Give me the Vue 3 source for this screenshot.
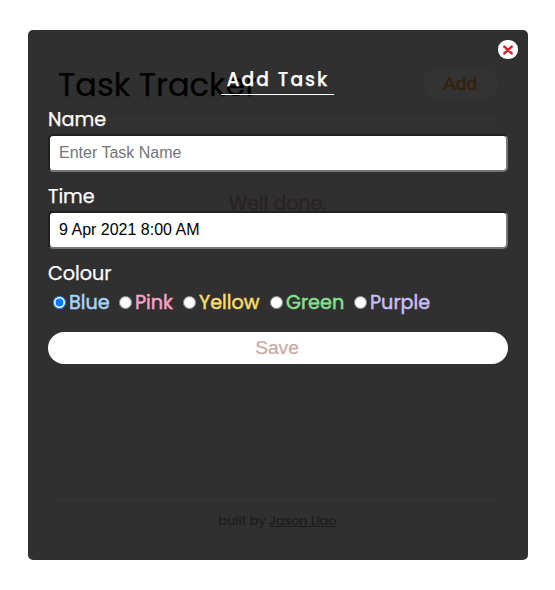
<script setup>
import { ref } from 'vue'

const name = ref('')
const time = ref('9 Apr 2021 8:00 AM')
const colour = ref('blue')
const colours = [
  { id: 'blue', label: 'Blue' },
  { id: 'pink', label: 'Pink' },
  { id: 'yellow', label: 'Yellow' },
  { id: 'green', label: 'Green' },
  { id: 'purple', label: 'Purple' },
]
</script>

<template>
  <main class="card">
    <section class="tracker">
      <header class="header">
        <h1>Task Tracker</h1>
        <button class="add" type="button">Add</button>
      </header>
      <p class="empty">Well done.</p>
      <footer class="footer">built by <a>Jason Liao</a></footer>
    </section>

    <form class="form" @submit.prevent>
      <button class="close" type="button" aria-label="Close">
        <svg viewBox="0 0 10 10" width="10" height="10">
          <path d="M1.3 1.6 8.7 8.4M8.7 1.6 1.3 8.4" />
        </svg>
      </button>
      <h2><span>Add Task</span></h2>
      <label class="caption name" for="name">Name</label>
      <input id="name" v-model="name" class="field" type="text" placeholder="Enter Task Name" />
      <label class="caption time" for="time">Time</label>
      <input id="time" v-model="time" class="field" type="text" />
      <div class="caption colour">Colour</div>
      <div class="colours">
        <label v-for="c in colours" :key="c.id" :class="['option', c.id]">
          <input v-model="colour" type="radio" name="colour" :value="c.id" />
          <span>{{ c.label }}</span>
        </label>
      </div>
      <button class="save" type="submit">Save</button>
    </form>
  </main>
</template>

<style>
body {
  background: #fff;
}
</style>

<style scoped>
.card {
  display: grid;
  box-sizing: border-box;
  width: 500px;
  height: 530px;
  margin: 30px 0 0 28px;
  border-radius: 5px;
  background: #303030;
  font-family: Poppins, Inter, sans-serif;
  -webkit-text-stroke-width: 0.25px;
  overflow: hidden;
}
.tracker,
.form {
  grid-area: 1 / 1;
  display: flex;
  flex-direction: column;
  min-width: 0;
}
.tracker {
  padding: 37px 30px 0;
}
.header {
  display: flex;
  justify-content: space-between;
  height: 51px;
  border-bottom: 3px solid #333;
}
h1 {
  margin: 0;
  font-size: 32px;
  line-height: 35px;
  font-weight: 400;
  color: #000;
}
.add {
  width: 75px;
  height: 33px;
  padding: 0 1px 0 0;
  border: 0;
  border-radius: 17px;
  background: #333;
  color: #332009;
  font: 19.2px 'Liberation Sans', sans-serif;
}
.empty {
  margin: 71px 1px 0 0;
  font-size: 19px;
  line-height: 24px;
  text-align: center;
  color: #292222;
}
.footer {
  box-sizing: border-box;
  height: 45px;
  margin-top: 283px;
  border-top: 3px solid #333;
  padding: 9px 1px 0 0;
  font-size: 12.8px;
  line-height: 20px;
  text-align: center;
  color: #1c1c1c;
}
.footer a {
  text-decoration: underline;
}
.form {
  padding: 10px 20px 0;
  color: #fff;
}
.close {
  display: flex;
  align-items: center;
  justify-content: center;
  align-self: flex-end;
  width: 20px;
  height: 19px;
  margin-right: -10px;
  padding: 0;
  border: 0;
  border-radius: 9px;
  background: #fff;
}
.close path {
  fill: none;
  stroke: #d8232a;
  stroke-width: 2.5;
  stroke-linecap: round;
}
h2 {
  height: 36px;
  margin: 0 2px 0 0;
  font-size: 18.72px;
  line-height: 32px;
  font-weight: 500;
  letter-spacing: 2px;
  text-align: center;
}
h2 span {
  display: inline-block;
  box-sizing: border-box;
  width: 113px;
  height: 31px;
  margin-top: 5px;
  padding-left: 2px;
  border-bottom: 1px solid #fff;
  line-height: 32px;
}
.caption {
  height: 30px;
  font-size: 19.2px;
  line-height: 32px;
}
.name {
  margin-top: 9px;
}
.field {
  box-sizing: border-box;
  width: 100%;
  height: 38px;
  padding: 0 9px;
  border: 2px inset #767676;
  border-radius: 5px;
  background: #fff;
  color: #000;
  font: 16px 'Liberation Sans', sans-serif;
  -webkit-text-stroke-width: 0;
  outline: none;
}
.field::placeholder {
  color: #757575;
}
.time,
.colour {
  margin-top: 9px;
}
.colours {
  display: flex;
  height: 30px;
}
.option {
  display: flex;
  align-items: center;
  height: 28px;
  font-size: 19.2px;
  white-space: nowrap;
}
.option span {
  padding-top: 2px;
  line-height: 28px;
  -webkit-text-stroke-width: 0.5px;
}
.option input {
  flex: none;
  width: 13px;
  height: 13px;
  margin: 0 3px 0 5px;
}
.blue { width: 66px; color: #a5d4fb; }
.pink { width: 64px; color: #f8a1c8; }
.yellow { width: 87px; color: #fbdc6c; }
.green { width: 84px; color: #85e08d; }
.purple { color: #c7befa; }
.save {
  height: 32px;
  margin-top: 14px;
  padding: 0 2px 0 0;
  border: 0;
  border-radius: 16px;
  background: #fff;
  color: #c8aca5;
  font: 19.2px 'Liberation Sans', sans-serif;
}
</style>
